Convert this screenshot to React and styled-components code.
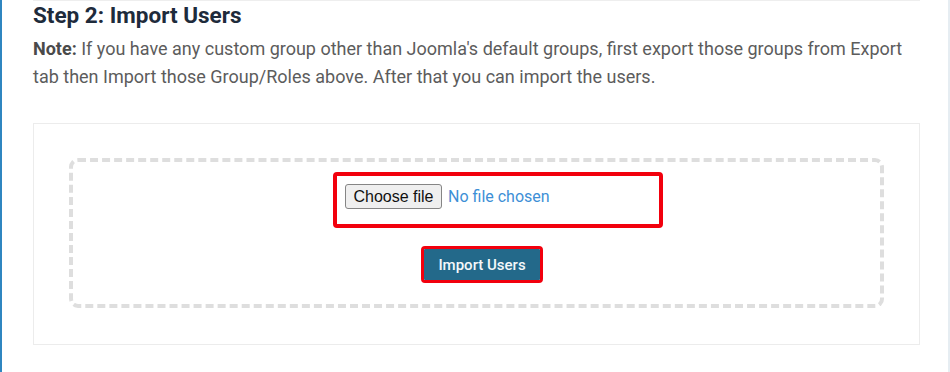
import { createGlobalStyle, styled } from "styled-components";

const GlobalStyle = createGlobalStyle`
  html, body {
    margin: 0;
    padding: 0;
    background: #ffffff;
  }
  body {
    font-family: Roboto, "Liberation Sans", Arial, sans-serif;
  }
`;

const Page = styled.div`
  height: 372px;
  box-sizing: border-box;
  border-left: 2px solid #2f86c0;
  border-right: 2px solid #e6edf2;
  padding-left: 31px;
  overflow: hidden;
`;

const Section = styled.section`
  width: 887px;
  border-top: 1px solid #eeeeee;
  padding-top: 1px;
`;

const Title = styled.h2`
  margin: 0;
  font-size: 22.5px;
  line-height: 27px;
  font-weight: 700;
  color: #1e2b3b;
`;

const Note = styled.p`
  margin: 6px 0 33px;
  font-size: 18px;
  line-height: 27.5px;
  color: #5c5c5c;

  strong {
    font-weight: 700;
    color: #4a4a4a;
  }
`;

const UploadCard = styled.div`
  box-sizing: border-box;
  height: 222px;
  border: 1px solid #ececec;
  padding: 34px 35px;
`;

const DropZone = styled.form`
  box-sizing: border-box;
  height: 150px;
  border: 4px dashed #dedede;
  border-radius: 9px;
  padding: 10px 0 0;
  display: flex;
  flex-direction: column;
  align-items: center;
`;

const Highlight = styled.div`
  box-sizing: border-box;
  border: ${(p) => p.$weight}px solid #f2000d;
  border-radius: 4px;
  margin-left: ${(p) => p.$shift}px;
`;

const FileBox = styled(Highlight)`
  width: 330px;
  height: 56px;
  padding: 8px 8px;
`;

const FilePicker = styled.label`
  display: flex;
  align-items: center;
  gap: 6px;
  cursor: pointer;

  input {
    display: none;
  }
`;

const PickerButton = styled.span`
  box-sizing: border-box;
  display: inline-flex;
  align-items: center;
  justify-content: center;
  width: 97px;
  height: 25px;
  background: #efefef;
  border: 1px solid #858585;
  border-radius: 3px;
  font-family: "Liberation Sans", Arial, sans-serif;
  font-size: 16px;
  color: #111111;
`;

const PickerText = styled.span`
  font-family: Roboto, "Liberation Sans", Arial, sans-serif;
  font-size: 16px;
  color: #3d8fd6;
  margin-top: -1px;
`;

const ButtonFrame = styled(Highlight)`
  margin-top: 18px;
  width: 122px;
  height: 37px;
`;

const SubmitButton = styled.button`
  width: 100%;
  height: 100%;
  border: 0;
  border-radius: 1px;
  background: #23698a;
  color: #f4f8fa;
  font-family: Roboto, "Liberation Sans", Arial, sans-serif;
  font-size: 15px;
  font-weight: 500;
  cursor: pointer;
`;

export default function App() {
  return (
    <>
      <GlobalStyle />
      <Page>
        <Section>
          <Title>Step 2: Import Users</Title>
          <Note>
            <strong>Note:</strong> If you have any custom group other than Joomla's default groups, first export those
            groups from Export tab then Import those Group/Roles above. After that you can import the users.
          </Note>
          <UploadCard>
            <DropZone onSubmit={(e) => e.preventDefault()}>
              <FileBox $weight={4} $shift={43}>
                <FilePicker>
                  <input type="file" name="users_file" />
                  <PickerButton>Choose file</PickerButton>
                  <PickerText>No file chosen</PickerText>
                </FilePicker>
              </FileBox>
              <ButtonFrame $weight={3} $shift={11}>
                <SubmitButton type="submit">Import Users</SubmitButton>
              </ButtonFrame>
            </DropZone>
          </UploadCard>
        </Section>
      </Page>
    </>
  );
}
